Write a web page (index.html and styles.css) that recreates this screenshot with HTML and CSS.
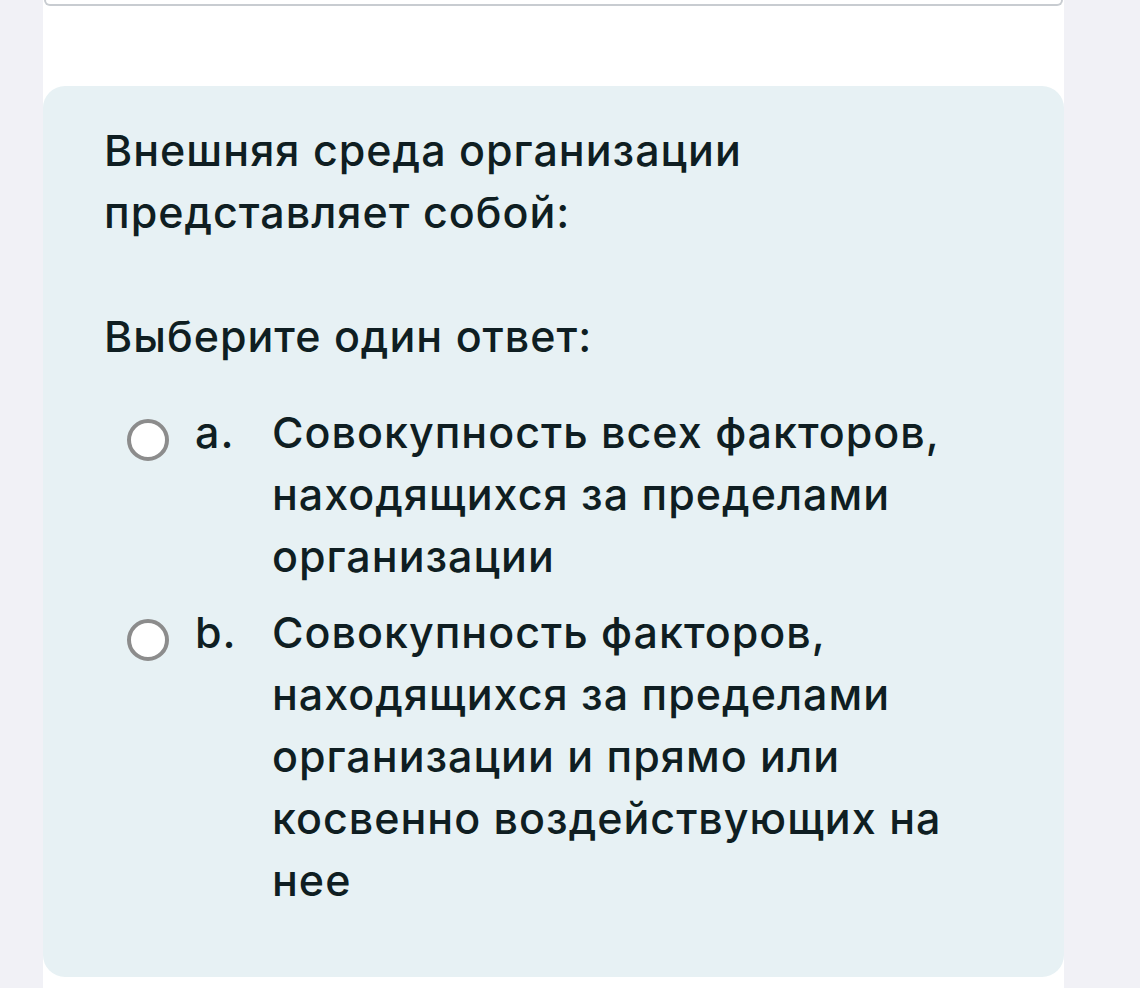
FILE: index.html
```
<!DOCTYPE html>
<html lang="ru">
<head>
    <meta charset="UTF-8">
    <meta name="viewport" content="width=device-width, initial-scale=1.0">
    <title>Тест</title>
    <link rel="stylesheet" href="styles.css">
</head>
<body>

    <div class="page">
        <div class="prev-box"></div>

        <div class="que">
            <div class="qtext">Внешняя среда организации представляет собой:</div>

            <div class="prompt">Выберите один ответ:</div>

            <div class="answer">
                <label class="option">
                    <input type="radio" name="q1" value="a">
                    <span class="letter">a.</span>
                    <span class="text">Совокупность всех факторов, находящихся за пределами организации</span>
                </label>
                <label class="option">
                    <input type="radio" name="q1" value="b">
                    <span class="letter">b.</span>
                    <span class="text">Совокупность факторов, находящихся за пределами организации и прямо или косвенно воздействующих на нее</span>
                </label>
            </div>
        </div>
    </div>

</body>
</html>
```

FILE: styles.css
```
body {
    margin: 0;
    background-color: #f1f1f6;
    font-family: 'Inter', 'Noto Sans', sans-serif;
    color: #0f1e22;
}

.page {
    width: 1021px;
    margin-left: 43px;
    min-height: 988px;
    background-color: #fff;
}

/* bottom edge of the block above */
.prev-box {
    height: 4px;
    margin: 0 1px;
    border: 2px solid #c8ccd1;
    border-top: none;
    border-radius: 0 0 6px 6px;
}

.que {
    margin-top: 80px;
    background-color: #e7f1f4;
    border-radius: 22px;
    padding: 33px 61px 66px;
    font-size: 43px;
    font-weight: 500;
    letter-spacing: 1px;
    line-height: 62px;
}

.qtext {
    width: 690px;
}

.prompt {
    margin-top: 62px;
}

.answer {
    margin-top: 34px;
}

.option {
    display: flex;
    align-items: flex-start;
    margin-bottom: 14px;
}

.option:last-child {
    margin-bottom: 0;
}

.option input {
    appearance: none;
    flex: none;
    width: 42px;
    height: 42px;
    margin: 18px 0 0 23px;
    border: 4px solid #8c8c8c;
    border-radius: 50%;
    background-color: #fff;
    box-sizing: border-box;
}

.letter {
    width: 77px;
    margin-left: 26px;
    flex: none;
}

.text {
    width: 680px;
}
```
